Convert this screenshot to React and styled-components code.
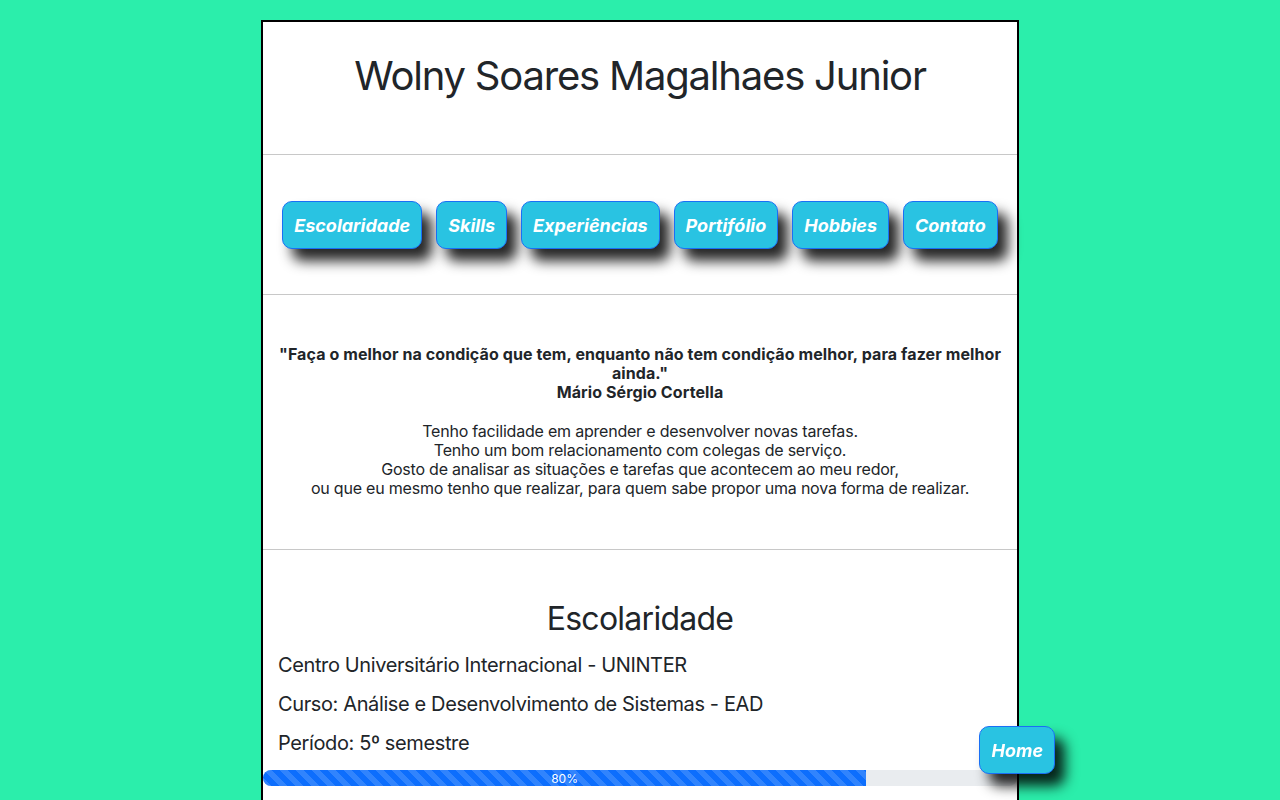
import React from 'react'
import styled, { createGlobalStyle } from 'styled-components'

const GlobalStyle = createGlobalStyle`
  body {
    margin: 0;
    padding: 20px 0 0;
    background: #2beeab;
    font-family: Inter, "Noto Sans", sans-serif;
    color: #212529;
  }
`

const Page = styled.main`
  width: 754px;
  margin: 0 auto;
  background: #fff;
  border: 2px solid #000;
  border-bottom: none;
  min-height: 800px;
`

const Header = styled.header`
  padding: 30px 0 54px;
  text-align: center;
  h1 {
    margin: 0;
    font-size: 40px;
    font-weight: 400;
    line-height: 48px;
    letter-spacing: -0.03em;
  }
`

const Rule = styled.hr`
  margin: 0;
  border: none;
  border-top: 1px solid #c8c8c8;
`

const Nav = styled.nav`
  display: flex;
  justify-content: center;
  gap: 14px;
  padding: 46px 0 45px;
`

const Button = styled.a`
  display: inline-flex;
  align-items: center;
  height: 48px;
  box-sizing: border-box;
  padding: 0 11px;
  background: #29c3e2;
  border: 1px solid #1a6ff5;
  border-radius: 10px;
  color: #fff;
  font-size: 18px;
  font-weight: 700;
  font-style: italic;
  text-decoration: none;
  box-shadow: 10px 12px 13px rgba(0, 0, 0, 0.85);
  cursor: pointer;
`

const HomeButton = styled(Button)`
  position: fixed;
  right: 225px;
  bottom: 26px;
`

const About = styled.section`
  padding: 50px 12px 51px;
  text-align: center;
  font-size: 16px;
  line-height: 19px;
  p {
    margin: 0;
  }
`

const Quote = styled.p`
  font-weight: 700;
  letter-spacing: 0.006em;
  margin-bottom: 20px !important;
`

const Text = styled.p`
  letter-spacing: -0.013em;
`

const Schooling = styled.section`
  padding-top: 50px;
  h2 {
    margin: 0 0 15px;
    text-align: center;
    font-size: 32px;
    font-weight: 400;
    line-height: 38px;
    letter-spacing: -0.023em;
  }
`

const Line = styled.p`
  margin: 0 15px 15px;
  font-size: 20px;
  line-height: 24px;
  letter-spacing: -0.019em;
`

const Progress = styled.div`
  height: 16px;
  background: #e9ecef;
  border-radius: 8px;
  overflow: hidden;
  display: flex;
`

const Bar = styled.div`
  display: flex;
  justify-content: center;
  align-items: center;
  color: #fff;
  font-size: 12px;
  background-color: #0d6efd;
  background-image: linear-gradient(
    45deg,
    rgba(255, 255, 255, 0.15) 25%,
    transparent 25%,
    transparent 50%,
    rgba(255, 255, 255, 0.15) 50%,
    rgba(255, 255, 255, 0.15) 75%,
    transparent 75%,
    transparent
  );
  background-size: 16px 16px;
`

const links = ['Escolaridade', 'Skills', 'Experiências', 'Portifólio', 'Hobbies', 'Contato']

export default function App() {
  const progress = 80
  return (
    <>
      <GlobalStyle />
      <Page>
        <Header>
          <h1>Wolny Soares Magalhaes Junior</h1>
        </Header>
        <Rule />
        <Nav>
          {links.map(l => (
            <Button key={l}>{l}</Button>
          ))}
        </Nav>
        <Rule />
        <About>
          <Quote>
            "Faça o melhor na condição que tem, enquanto não tem condição melhor, para fazer melhor ainda."
            <br />
            Mário Sérgio Cortella
          </Quote>
          <Text>
            Tenho facilidade em aprender e desenvolver novas tarefas.
            <br />
            Tenho um bom relacionamento com colegas de serviço.
            <br />
            Gosto de analisar as situações e tarefas que acontecem ao meu redor,
            <br />
            ou que eu mesmo tenho que realizar, para quem sabe propor uma nova forma de realizar.
          </Text>
        </About>
        <Rule />
        <Schooling>
          <h2>Escolaridade</h2>
          <Line>Centro Universitário Internacional - UNINTER</Line>
          <Line>Curso: Análise e Desenvolvimento de Sistemas - EAD</Line>
          <Line>Período: 5º semestre</Line>
          <Progress>
            <Bar style={{ width: `${progress}%` }}>{progress}%</Bar>
          </Progress>
        </Schooling>
      </Page>
      <HomeButton>Home</HomeButton>
    </>
  )
}
